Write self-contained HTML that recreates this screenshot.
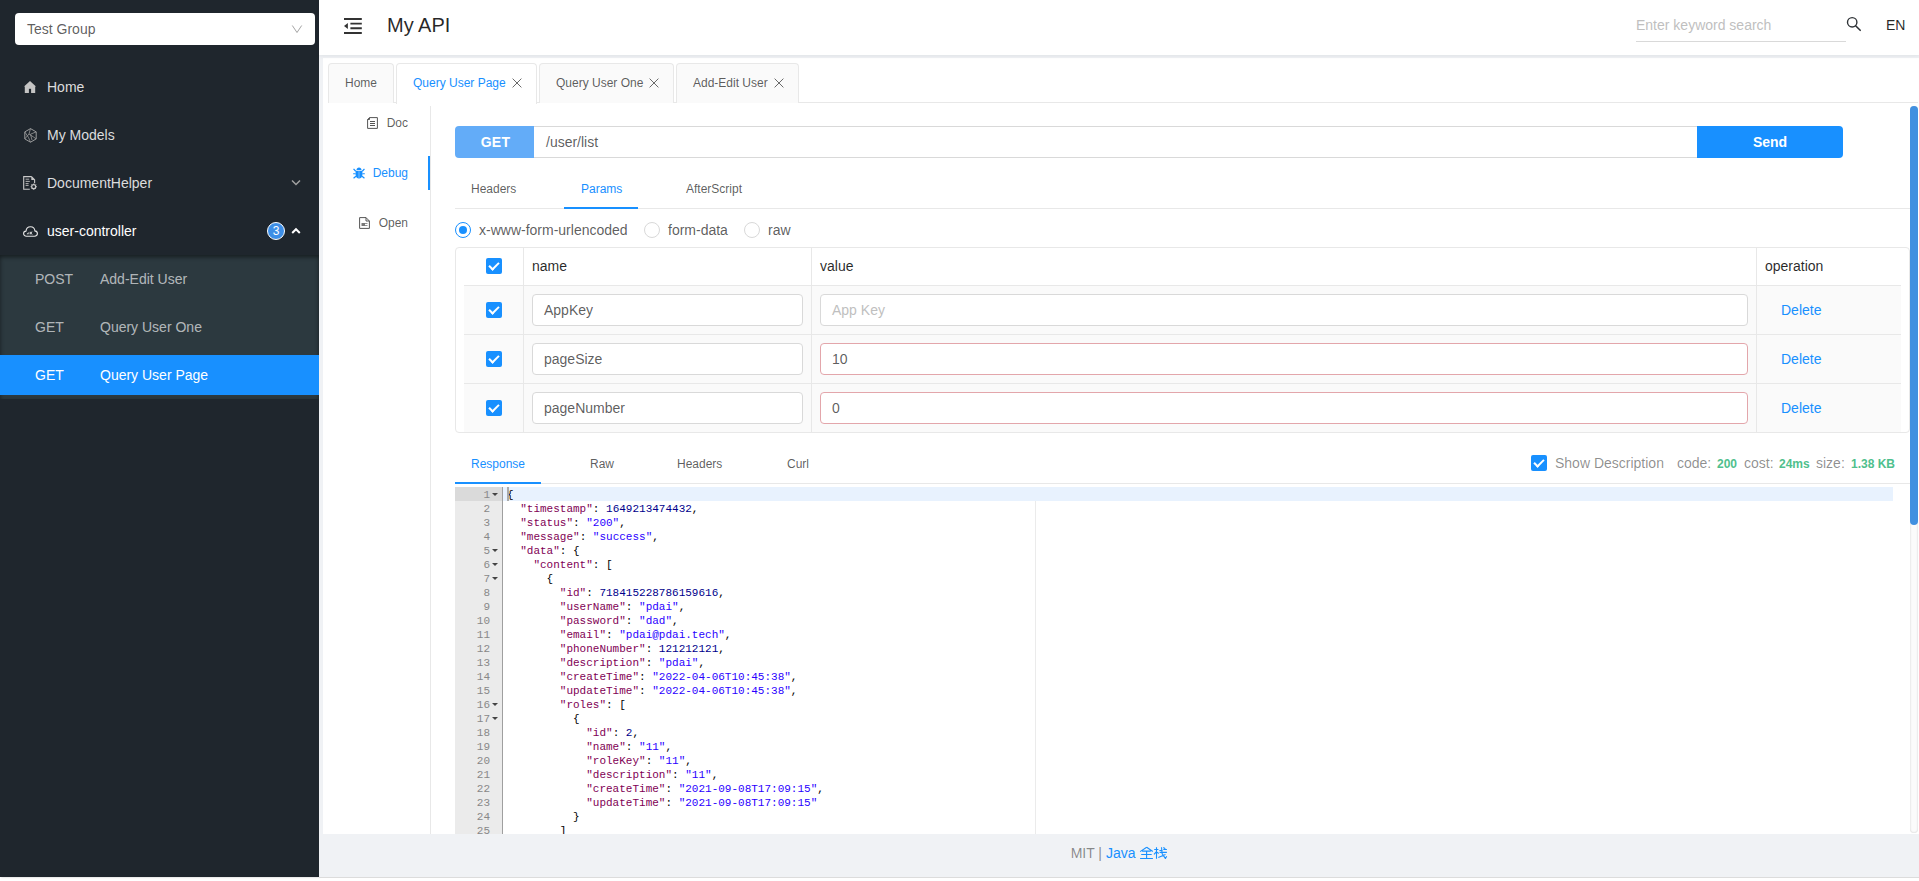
<!DOCTYPE html>
<html><head><meta charset="utf-8">
<style>
*{box-sizing:border-box;margin:0;padding:0}
html,body{width:1919px;height:881px;overflow:hidden;background:#fff;font-family:"Liberation Sans",sans-serif;font-size:14px;color:rgba(0,0,0,.65)}
.abs{position:absolute}
#side{left:0;top:0;width:319px;height:877px;background:#1f262d;box-shadow:1px 0 2px rgba(0,0,0,.25)}
#sel{left:15px;top:13px;width:300px;height:32px;background:#fff;border-radius:4px;color:rgba(0,0,0,.65);font-size:14px;line-height:32px;padding-left:12px}
.mi{position:absolute;left:0;width:319px;height:40px;line-height:40px;color:rgba(255,255,255,.85);font-size:14px}
.mi .ic{position:absolute;left:24px;top:14px;width:12px;height:12px}
.mi .tx{position:absolute;left:47px;top:0}
#sub{left:0;top:255px;width:319px;height:144px;background:#2c393f;box-shadow:inset 0 2px 4px rgba(0,0,0,.5)}
.si{position:absolute;left:0;width:319px;height:40px;line-height:40px;color:rgba(255,255,255,.65);font-size:14px}
.si .m{position:absolute;left:35px}
.si .n{position:absolute;left:100px}
#head{left:319px;top:0;width:1600px;height:55px;background:#fff;box-shadow:0 1px 4px rgba(0,21,41,.08);z-index:2}
#band{left:319px;top:55px;width:1600px;height:822px;background:#f0f2f5}
#card{left:323px;top:58px;width:1596px;height:776px;background:#fff}
#foot{left:319px;top:834px;width:1600px;height:43px;background:#f0f2f5;text-align:center;line-height:38px;font-size:14px;color:rgba(0,0,0,.45)}
.tab{position:absolute;top:63px;white-space:nowrap;height:40px;line-height:38px;border:1px solid #e8e8e8;border-bottom:none;border-radius:4px 4px 0 0;background:#fafafa;padding:0 16px;font-size:12px;color:rgba(0,0,0,.65)}
.tab.act{background:#fff;color:#1890ff;height:41px}
.x{display:inline-block;width:10px;height:10px;margin-left:6px;position:relative;top:1px}
.vt{position:absolute;right:0;font-size:13px;color:rgba(0,0,0,.65);text-align:right}
.ck{position:absolute;width:16px;height:16px;background:#1890ff;border-radius:2px}
.ck:after{content:"";position:absolute;left:5px;top:2px;width:4px;height:8px;border:solid #fff;border-width:0 2px 2px 0;transform:rotate(45deg)}
.inp{position:absolute;height:32px;border:1px solid #d9d9d9;border-radius:4px;background:#fff;padding-left:11px;line-height:30px;font-size:14px;color:rgba(0,0,0,.65)}
.inp.err{border-color:#e3a6ab}
.del{position:absolute;left:1781px;margin-top:2px;color:#1890ff;font-size:14px}
.radio{position:absolute;top:222px;width:16px;height:16px;border:1px solid #d9d9d9;border-radius:50%;background:#fff}
.radio.on{border-color:#1890ff}
.radio.on:after{content:"";position:absolute;left:3px;top:3px;width:8px;height:8px;border-radius:50%;background:#1890ff}
.rt{position:absolute;top:220px;line-height:20px;font-size:14px;color:rgba(0,0,0,.65)}
#code{left:455px;top:487px;width:1438px;height:347px;overflow:hidden;font-family:"Liberation Mono",monospace;font-size:11px;line-height:14px;color:#000}
.gut{position:absolute;left:0;top:0;width:47px;height:400px;background:#ebebeb}
.ln{position:absolute;left:0;width:46px;height:14px;text-align:right;padding-right:11px;color:#888;margin-top:1px}
.cl{position:absolute;left:52px;white-space:pre;height:14px;margin-top:1px}
.k{color:#7f0055}.s{color:#2a00ff}.nm{color:#00008b}
.fw{position:absolute;left:37px;width:0;height:0;border-left:3px solid transparent;border-right:3px solid transparent;border-top:3px solid #444}
</style></head><body>
<div id="side" class="abs">
  <div id="sel" class="abs">Test Group<svg class="abs" style="left:276px;top:11px" width="12" height="10" viewBox="0 0 12 10"><path d="M1.3 1.5 L6 8.5 L10.7 1.5" fill="none" stroke="#9a9a9a" stroke-width="0.9"/></svg></div>
  <div class="mi" style="top:67px"><svg class="ic" viewBox="0 0 12 12"><path d="M6 0.1 L12 5.4 L11.2 5.4 V12 H0.8 V5.4 H0 Z" fill="#c4c4c4"/><rect x="4.9" y="7.8" width="2.2" height="4.2" fill="#1f262d"/></svg><span class="tx">Home</span></div>
  <div class="mi" style="top:115px"><svg class="ic" style="top:13px;width:13px;height:15px" viewBox="0 0 13 15"><path d="M6.5 0.6 L12.2 3.9 V10.9 L6.5 14.2 L0.8 10.9 V3.9 Z" fill="none" stroke="#a8a8a8" stroke-width="0.9"/><path d="M6.5 0.6 L5 6 L0.8 10.9 M12.2 3.9 L6.5 6.2 L8 12 M5 6 L9.5 9 L12.2 10.9 M0.8 3.9 L4.5 9.5 L6.5 14.2" fill="none" stroke="#9a9a9a" stroke-width="0.8"/></svg><span class="tx">My Models</span></div>
  <div class="mi" style="top:163px"><svg class="ic" style="left:23px;top:176px;width:14px;height:14px;top:13px" viewBox="0 0 14 14"><path d="M8.5 0.6 H0.7 V13.3 H6.8 M8.5 0.6 L11.6 3.7 V7.2" fill="none" stroke="#c8c8c8" stroke-width="1.1"/><path d="M8.3 0.6 L11.6 3.9 H8.3 Z" fill="#c8c8c8"/><path d="M2.6 3.2 H6.2 M2.6 5.4 H6.8 M2.6 7.6 H5.6 M2.6 9.4 H5.6" stroke="#b0b0b0" stroke-width="1"/><circle cx="10.7" cy="10.7" r="2" fill="none" stroke="#c8c8c8" stroke-width="1.2"/><path d="M10.7 7.6 V8.4 M10.7 13 V13.8 M7.6 10.7 H8.4 M13 10.7 H13.8 M8.5 8.5 L9.1 9.1 M12.3 12.3 L12.9 12.9 M12.9 8.5 L12.3 9.1 M8.5 12.9 L9.1 12.3" stroke="#c8c8c8" stroke-width="1"/></svg><span class="tx">DocumentHelper</span><svg class="abs" style="left:291px;top:16px" width="10" height="7" viewBox="0 0 10 7"><path d="M1 1.5 L5 5.5 L9 1.5" fill="none" stroke="#a0a0a0" stroke-width="1.5"/></svg></div>
  <div class="mi" style="top:211px;color:#fff"><svg class="ic" style="left:23px;top:15px;width:15px;height:11px" viewBox="0 0 15 11"><path d="M3.5 10.2 C1.6 10.2 0.6 9 0.6 7.6 C0.6 6.2 1.7 5.2 3 5.1 C3.2 2.6 5.1 0.7 7.5 0.7 C9.9 0.7 11.7 2.5 11.9 4.9 C13.3 5.1 14.4 6.2 14.4 7.6 C14.4 9 13.3 10.2 11.5 10.2 Z" fill="none" stroke="#e6e6e6" stroke-width="1.1"/><path d="M3.6 8.3 L5.6 6 V8.3 Z" fill="#e6e6e6"/><path d="M7.2 5.8 V8.4 M7.3 7.2 L9.2 5.8 M7.6 7 L9.3 8.4" stroke="#e6e6e6" stroke-width="1"/></svg><span class="tx">user-controller</span>
    <div class="abs" style="left:267px;top:11px;width:18px;height:18px;border-radius:50%;background:#3d8ee6;border:1px solid #fff;color:#fff;font-size:12px;line-height:16px;text-align:center">3</div>
    <svg class="abs" style="left:291px;top:16px" width="10" height="8" viewBox="0 0 10 8"><path d="M1.2 6 L5 2.2 L8.8 6" fill="none" stroke="#fff" stroke-width="2"/></svg>
  </div>
</div>
<div id="sub" class="abs">
  <div class="si" style="top:4px"><span class="m">POST</span><span class="n">Add-Edit User</span></div>
  <div class="si" style="top:52px"><span class="m">GET</span><span class="n">Query User One</span></div>
  <div class="si" style="top:100px;background:#1890ff;color:#fff"><span class="m">GET</span><span class="n">Query User Page</span></div>
</div>
<div id="head" class="abs">
  <svg class="abs" style="left:25px;top:18px" width="18" height="16" viewBox="0 0 18 16"><path d="M0 1 H17.8 M6.4 5.6 H17.8 M6.4 10.25 H17.8 M0 15 H17.8" stroke="#333" stroke-width="1.8"/><path d="M0 7.95 L3.9 5 V10.9 Z" fill="#333"/></svg>
  <div class="abs" style="left:68px;top:12px;font-size:20px;line-height:26px;color:rgba(0,0,0,.85)">My API</div>
  <div class="abs" style="left:1317px;top:14px;width:210px;height:28px;border-bottom:1px solid #d9d9d9;font-size:14px;line-height:22px;color:#bfbfbf">Enter keyword search</div>
  <svg class="abs" style="left:1527px;top:16px" width="16" height="16" viewBox="0 0 16 16"><circle cx="6.2" cy="6.3" r="4.7" fill="none" stroke="#2f3337" stroke-width="1.4"/><path d="M9.6 9.7 L14.2 14.3" stroke="#2f3337" stroke-width="1.6" stroke-linecap="round"/></svg>
  <div class="abs" style="left:1567px;top:14px;font-size:14px;line-height:22px;color:rgba(0,0,0,.85)">EN</div>
</div>
<div id="band" class="abs"></div>
<div id="card" class="abs"></div>
<div class="abs" style="left:328px;top:102px;width:1590px;height:1px;background:#e8e8e8"></div>
<div class="tab" style="left:328px;width:66px">Home</div>
<div class="tab act" style="left:396px;width:141px">Query User Page<svg class="x" viewBox="0 0 10 10"><path d="M0.6 0.6 L9.4 9.4 M9.4 0.6 L0.6 9.4" stroke="#6a6a6a" stroke-width="1"/></svg></div>
<div class="tab" style="left:539px;width:135px">Query User One<svg class="x" viewBox="0 0 10 10"><path d="M0.6 0.6 L9.4 9.4 M9.4 0.6 L0.6 9.4" stroke="#6a6a6a" stroke-width="1"/></svg></div>
<div class="tab" style="left:676px;width:123px">Add-Edit User<svg class="x" viewBox="0 0 10 10"><path d="M0.6 0.6 L9.4 9.4 M9.4 0.6 L0.6 9.4" stroke="#6a6a6a" stroke-width="1"/></svg></div>
<div class="abs" style="left:430px;top:106px;width:1px;height:728px;background:#e8e8e8"></div>
<div class="abs" style="left:428px;top:156px;width:2px;height:34px;background:#1890ff"></div>
<div class="abs" style="left:330px;top:113px;width:78px;height:21px;text-align:right;font-size:12px;line-height:21px;color:rgba(0,0,0,.65)"><svg style="position:relative;top:2px;margin-right:9px" width="11" height="12" viewBox="0 0 11 12"><path d="M2.5 0.6 H10.4 V11.4 H0.6 V2.5 Z M2.5 0.6 V2.5 H0.6 M3 4.5 H8 M3 6.5 H8 M3 8.5 H8" fill="none" stroke="#555" stroke-width="1"/></svg>Doc</div>
<div class="abs" style="left:330px;top:163px;width:78px;height:21px;text-align:right;font-size:12px;line-height:21px;color:#1890ff"><svg style="position:relative;top:2px;margin-right:8px" width="12" height="12" viewBox="0 0 13 13"><path d="M3.8 3.2 C3.8 1.6 5 0.6 6.5 0.6 C8 0.6 9.2 1.6 9.2 3.2 Z" fill="#1890ff"/><path d="M2.8 4 H10.2 V8.3 C10.2 10.6 8.6 12.4 6.5 12.4 C4.4 12.4 2.8 10.6 2.8 8.3 Z" fill="#1890ff"/><path d="M0.6 2 L2.9 4.6 M12.4 2 L10.1 4.6 M0.2 7.3 H2.9 M12.8 7.3 H10.1 M0.6 12.2 L3.2 10 M12.4 12.2 L9.8 10" stroke="#1890ff" stroke-width="1.3" fill="none"/><path d="M6.5 4.6 V11.8" stroke="#8cc8ff" stroke-width="0.9"/></svg>Debug</div>
<div class="abs" style="left:330px;top:213px;width:78px;height:21px;text-align:right;font-size:12px;line-height:21px;color:rgba(0,0,0,.65)"><svg style="position:relative;top:2px;margin-right:9px" width="11" height="12" viewBox="0 0 11 12"><path d="M0.6 0.6 H7 L10.4 4 V11.4 H0.6 Z M7 0.6 V4 H10.4" fill="none" stroke="#555" stroke-width="1"/><path d="M2.5 6 H6 V9 H2.5 Z" fill="#777"/><path d="M6 6.5 H8.5 M6 8.5 H8.5" stroke="#777" stroke-width="0.8"/></svg>Open</div>

<div class="abs" style="left:455px;top:126px;width:79px;height:32px;background:#63acf8;border-radius:4px 0 0 4px;color:#fff;font-weight:bold;font-size:14px;line-height:32px;text-align:center;padding-left:2px;letter-spacing:0.3px">GET</div>
<div class="abs" style="left:534px;top:126px;width:1164px;height:32px;border:1px solid #d9d9d9;border-left:none;font-size:14px;line-height:30px;padding-left:12px;color:rgba(0,0,0,.65)">/user/list</div>
<div class="abs" style="left:1697px;top:126px;width:146px;height:32px;background:#1890ff;border-radius:0 4px 4px 0;color:#fff;font-weight:bold;font-size:14px;line-height:32px;text-align:center">Send</div>

<div class="abs" style="left:455px;top:208px;width:1455px;height:1px;background:#e8e8e8"></div>
<div class="abs" style="left:564px;top:207px;width:74px;height:2px;background:#1890ff"></div>
<div class="abs" style="left:471px;top:181px;font-size:12px;line-height:16px;color:rgba(0,0,0,.65)">Headers</div>
<div class="abs" style="left:581px;top:181px;font-size:12px;line-height:16px;color:#1890ff">Params</div>
<div class="abs" style="left:686px;top:181px;font-size:12px;line-height:16px;color:rgba(0,0,0,.65)">AfterScript</div>

<div class="radio on" style="left:455px"></div><div class="rt" style="left:479px">x-www-form-urlencoded</div>
<div class="radio" style="left:644px"></div><div class="rt" style="left:668px">form-data</div>
<div class="radio" style="left:744px"></div><div class="rt" style="left:768px">raw</div>

<div class="abs" style="left:455px;top:247px;width:1455px;height:186px;border:1px solid #e8e8e8;border-radius:4px"></div>
<div class="abs" style="left:464px;top:286px;width:1437px;height:146px;background:#fafafa"></div>
<div class="abs" style="left:464px;top:285px;width:1437px;height:1px;background:#e8e8e8"></div>
<div class="abs" style="left:464px;top:334px;width:1437px;height:1px;background:#e8e8e8"></div>
<div class="abs" style="left:464px;top:383px;width:1437px;height:1px;background:#e8e8e8"></div>
<div class="abs" style="left:523px;top:248px;width:1px;height:184px;background:#e8e8e8"></div>
<div class="abs" style="left:811px;top:248px;width:1px;height:184px;background:#e8e8e8"></div>
<div class="abs" style="left:1756px;top:248px;width:1px;height:184px;background:#e8e8e8"></div>
<div class="ck" style="left:486px;top:258px"></div>
<div class="abs" style="left:532px;top:256px;font-size:14px;line-height:20px;color:rgba(0,0,0,.85)">name</div>
<div class="abs" style="left:820px;top:256px;font-size:14px;line-height:20px;color:rgba(0,0,0,.85)">value</div>
<div class="abs" style="left:1765px;top:256px;font-size:14px;line-height:20px;color:rgba(0,0,0,.85)">operation</div>

<div class="ck" style="left:486px;top:302px"></div>
<div class="inp" style="left:532px;top:294px;width:271px">AppKey</div>
<div class="inp" style="left:820px;top:294px;width:928px;color:#bfbfbf">App Key</div>
<div class="del" style="top:300px">Delete</div>
<div class="ck" style="left:486px;top:351px"></div>
<div class="inp" style="left:532px;top:343px;width:271px">pageSize</div>
<div class="inp err" style="left:820px;top:343px;width:928px">10</div>
<div class="del" style="top:349px">Delete</div>
<div class="ck" style="left:486px;top:400px"></div>
<div class="inp" style="left:532px;top:392px;width:271px">pageNumber</div>
<div class="inp err" style="left:820px;top:392px;width:928px">0</div>
<div class="del" style="top:398px">Delete</div>

<div class="abs" style="left:455px;top:483px;width:1455px;height:1px;background:#e8e8e8"></div>
<div class="abs" style="left:455px;top:482px;width:86px;height:2px;background:#1890ff"></div>
<div class="abs" style="left:471px;top:456px;font-size:12px;line-height:16px;color:#1890ff">Response</div>
<div class="abs" style="left:590px;top:456px;font-size:12px;line-height:16px;color:rgba(0,0,0,.65)">Raw</div>
<div class="abs" style="left:677px;top:456px;font-size:12px;line-height:16px;color:rgba(0,0,0,.65)">Headers</div>
<div class="abs" style="left:787px;top:456px;font-size:12px;line-height:16px;color:rgba(0,0,0,.65)">Curl</div>
<div class="ck" style="left:1531px;top:455px"></div>
<div class="abs" style="left:1555px;top:453px;font-size:14px;line-height:20px;color:rgba(0,0,0,.45);white-space:nowrap">Show Description</div>
<div class="abs" style="left:1677px;top:453px;font-size:14px;line-height:20px;color:rgba(0,0,0,.45);white-space:nowrap">code:</div>
<div class="abs" style="left:1717px;top:454px;font-size:12px;line-height:20px;color:#4fc08d;font-weight:bold">200</div>
<div class="abs" style="left:1744px;top:453px;font-size:14px;line-height:20px;color:rgba(0,0,0,.45)">cost:</div>
<div class="abs" style="left:1779px;top:454px;font-size:12px;line-height:20px;color:#4fc08d;font-weight:bold">24ms</div>
<div class="abs" style="left:1816px;top:453px;font-size:14px;line-height:20px;color:rgba(0,0,0,.45)">size:</div>
<div class="abs" style="left:1851px;top:454px;font-size:12px;line-height:20px;color:#4fc08d;font-weight:bold;white-space:nowrap">1.38 KB</div>
<div id="code" class="abs">
<div class="abs" style="left:580px;top:0;width:1px;height:400px;background:#ebebeb"></div>
<div class="abs" style="left:48px;top:0;width:1390px;height:14px;background:#e8f2fe"></div>
<div class="gut"></div>
<div class="abs" style="left:0;top:0;width:47px;height:14px;background:#dadada"></div><div class="abs" style="left:47px;top:0;width:1px;height:400px;background:#9f9f9f"></div>
<div class="ln" style="top:0px">1</div>
<div class="fw" style="top:6px"></div>
<div class="cl" style="top:0px">{</div>
<div class="ln" style="top:14px">2</div>
<div class="cl" style="top:14px">  <span class="k">"timestamp"</span>: <span class="nm">1649213474432</span>,</div>
<div class="ln" style="top:28px">3</div>
<div class="cl" style="top:28px">  <span class="k">"status"</span>: <span class="s">"200"</span>,</div>
<div class="ln" style="top:42px">4</div>
<div class="cl" style="top:42px">  <span class="k">"message"</span>: <span class="s">"success"</span>,</div>
<div class="ln" style="top:56px">5</div>
<div class="fw" style="top:62px"></div>
<div class="cl" style="top:56px">  <span class="k">"data"</span>: {</div>
<div class="ln" style="top:70px">6</div>
<div class="fw" style="top:76px"></div>
<div class="cl" style="top:70px">    <span class="k">"content"</span>: [</div>
<div class="ln" style="top:84px">7</div>
<div class="fw" style="top:90px"></div>
<div class="cl" style="top:84px">      {</div>
<div class="ln" style="top:98px">8</div>
<div class="cl" style="top:98px">        <span class="k">"id"</span>: <span class="nm">718415228786159616</span>,</div>
<div class="ln" style="top:112px">9</div>
<div class="cl" style="top:112px">        <span class="k">"userName"</span>: <span class="s">"pdai"</span>,</div>
<div class="ln" style="top:126px">10</div>
<div class="cl" style="top:126px">        <span class="k">"password"</span>: <span class="s">"dad"</span>,</div>
<div class="ln" style="top:140px">11</div>
<div class="cl" style="top:140px">        <span class="k">"email"</span>: <span class="s">"pdai@pdai.tech"</span>,</div>
<div class="ln" style="top:154px">12</div>
<div class="cl" style="top:154px">        <span class="k">"phoneNumber"</span>: <span class="nm">121212121</span>,</div>
<div class="ln" style="top:168px">13</div>
<div class="cl" style="top:168px">        <span class="k">"description"</span>: <span class="s">"pdai"</span>,</div>
<div class="ln" style="top:182px">14</div>
<div class="cl" style="top:182px">        <span class="k">"createTime"</span>: <span class="s">"2022-04-06T10:45:38"</span>,</div>
<div class="ln" style="top:196px">15</div>
<div class="cl" style="top:196px">        <span class="k">"updateTime"</span>: <span class="s">"2022-04-06T10:45:38"</span>,</div>
<div class="ln" style="top:210px">16</div>
<div class="fw" style="top:216px"></div>
<div class="cl" style="top:210px">        <span class="k">"roles"</span>: [</div>
<div class="ln" style="top:224px">17</div>
<div class="fw" style="top:230px"></div>
<div class="cl" style="top:224px">          {</div>
<div class="ln" style="top:238px">18</div>
<div class="cl" style="top:238px">            <span class="k">"id"</span>: <span class="nm">2</span>,</div>
<div class="ln" style="top:252px">19</div>
<div class="cl" style="top:252px">            <span class="k">"name"</span>: <span class="s">"11"</span>,</div>
<div class="ln" style="top:266px">20</div>
<div class="cl" style="top:266px">            <span class="k">"roleKey"</span>: <span class="s">"11"</span>,</div>
<div class="ln" style="top:280px">21</div>
<div class="cl" style="top:280px">            <span class="k">"description"</span>: <span class="s">"11"</span>,</div>
<div class="ln" style="top:294px">22</div>
<div class="cl" style="top:294px">            <span class="k">"createTime"</span>: <span class="s">"2021-09-08T17:09:15"</span>,</div>
<div class="ln" style="top:308px">23</div>
<div class="cl" style="top:308px">            <span class="k">"updateTime"</span>: <span class="s">"2021-09-08T17:09:15"</span></div>
<div class="ln" style="top:322px">24</div>
<div class="cl" style="top:322px">          }</div>
<div class="ln" style="top:336px">25</div>
<div class="cl" style="top:336px">        ]</div>
<div class="ln" style="top:350px">26</div>
<div class="cl" style="top:350px">      }</div>
<div class="abs" style="left:52px;top:0;width:2px;height:14px;background:#aaa"></div>
</div>
<div class="abs" style="left:1910px;top:106px;width:8px;height:727px;background:#fbfbfb;border-radius:4px;box-shadow:inset 0 0 2px rgba(0,0,0,.22)"></div>
<div class="abs" style="left:1910px;top:106px;width:8px;height:419px;background:#4190e0;border-radius:4px"></div>

<div class="abs" style="left:319px;top:877px;width:1600px;height:1px;background:#dcdcdc"></div>
<div id="foot" class="abs">MIT | <span style="color:#1890ff">Java <span style="display:inline-block;width:28px;height:10px"></span></span></div>
<svg class="abs" style="left:1139px;top:845px" width="30" height="16" viewBox="0 0 30 16"><g fill="none" stroke="#1890ff" stroke-width="1.1" stroke-linecap="butt">
<path d="M7.7 2.2 L1.1 6.6 M7.7 2.2 L13.8 6.5 M3.1 6.1 H11.8 M2.2 9.5 H12.7 M1.1 13.5 H13.9 M7.6 6.1 V13.5"/>
<path d="M17.5 2.3 V13.7 M15.2 4.5 H19.4 M17.5 6.6 L15 9.4 M17.9 7.1 L19.7 8.5 M24.3 4.5 H27.9 M24.3 2.5 L26.3 3.7 M20.4 5.5 H23.6 M20.6 7.4 H27.9 M19.3 12.5 L26.5 9.4 M22.5 2.3 L23.1 8.5 L26.5 13.6 M27.7 11.2 L26.3 13.7"/>
</g></svg>
</body></html>
